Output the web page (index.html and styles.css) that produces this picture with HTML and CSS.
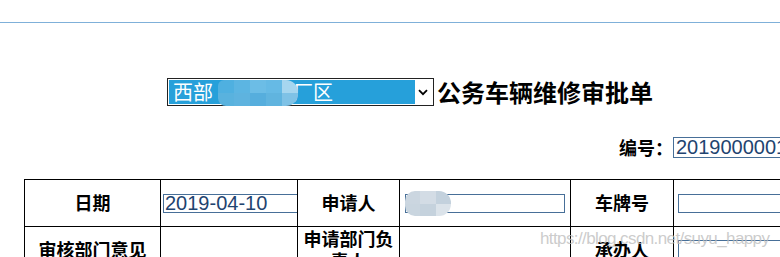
FILE: index.html
```html
<!DOCTYPE html>
<html lang="zh-CN">
<head>
    <meta charset="UTF-8">
    <title>公务车辆维修审批单</title>
    <link rel="stylesheet" href="styles.css">
</head>
<body>
    <div class="page">
        <div class="top-line"></div>

        <div class="title-row">
            <label class="select-wrap">
                <select class="plant-select">
                    <option>西部　　　　厂区</option>
                </select>
                <svg class="chevron" width="10" height="7" viewBox="0 0 10 7">
                    <path d="M1 1.2 L5 5.2 L9 1.2" fill="none" stroke="#000" stroke-width="1.8"/>
                </svg>
                <span class="mosaic mosaic-blue">
                    <i></i><i></i><i></i><i></i><i></i>
                    <i></i><i></i><i></i><i></i><i></i>
                </span>
            </label>
            <h1>公务车辆维修审批单</h1>
        </div>

        <div class="no-row">
            <label for="billNo">编号：</label>
            <input type="text" id="billNo" value="2019000001">
        </div>

        <table class="form">
            <colgroup>
                <col style="width:136px">
                <col style="width:137px">
                <col style="width:102px">
                <col style="width:171px">
                <col style="width:103px">
                <col style="width:122px">
            </colgroup>
            <tr class="row-1">
                <th>日期</th>
                <td><input type="text" class="date-input" value="2019-04-10"></td>
                <th>申请人</th>
                <td class="name-cell">
                    <input type="text" class="field">
                    <span class="mosaic mosaic-gray">
                        <i></i><i></i><i></i>
                        <i></i><i></i><i></i>
                    </span>
                </td>
                <th>车牌号</th>
                <td><input type="text" class="field field-last"></td>
            </tr>
            <tr>
                <th>审核部门意见</th>
                <td></td>
                <th>申请部门负责人</th>
                <td></td>
                <th>承办人</th>
                <td><input type="text" class="field field-last"></td>
            </tr>
        </table>

        <div class="watermark">https://blog.csdn.net/suyu_happy</div>
    </div>
</body>
</html>
```

FILE: styles.css
```css
html,
body {
    margin: 0;
    overflow: hidden;
    background: #fff;
}

body {
    font-family: "Noto Sans CJK SC", "Noto Sans", sans-serif;
    color: #000;
}

.page {
    position: relative;
    width: 820px;
    padding-top: 22px;
}

.top-line {
    border-top: 1px solid #7fb0d9;
}

.title-row {
    display: flex;
    justify-content: center;
    align-items: center;
    margin-top: 55px;
}

.select-wrap {
    position: relative;
    display: flex;
    align-items: center;
    width: 267px;
    height: 28px;
    box-sizing: border-box;
    border: 1px solid #222;
    background: #fff;
}

.plant-select {
    appearance: none;
    -webkit-appearance: none;
    flex: 1;
    height: 24px;
    margin: 0 0 0 1px;
    padding: 0 0 0 4px;
    border: none;
    outline: none;
    background: #26a0da;
    color: #fff;
    font-family: "Noto Sans CJK SC", sans-serif;
    font-size: 20px;
    line-height: 24px;
}

.chevron {
    margin: 0 5px 0 3px;
}

.mosaic {
    position: absolute;
    display: grid;
    overflow: hidden;
    filter: blur(0.6px);
}

.mosaic i {
    display: block;
}

.mosaic-blue {
    left: 50px;
    top: 1px;
    width: 80px;
    height: 26px;
    grid-template-columns: repeat(5, 1fr);
    border-radius: 6px 12px 12px 8px;
}

.mosaic-blue i:nth-child(1) { background: #4fb0e0; }
.mosaic-blue i:nth-child(2) { background: #5cb5e2; }
.mosaic-blue i:nth-child(3) { background: #6cbde6; }
.mosaic-blue i:nth-child(4) { background: #66bae5; }
.mosaic-blue i:nth-child(5) { background: #a6d6ef; }
.mosaic-blue i:nth-child(6) { background: #59b2de; }
.mosaic-blue i:nth-child(7) { background: #5eb3df; }
.mosaic-blue i:nth-child(8) { background: #56aedd; }
.mosaic-blue i:nth-child(9) { background: #60b4df; }
.mosaic-blue i:nth-child(10) { background: #7fc2e6; }

h1 {
    margin: 0 0 0 3px;
    font-size: 24px;
    line-height: 28px;
    font-weight: bold;
}

.no-row {
    display: flex;
    justify-content: flex-end;
    align-items: center;
    margin-top: 30px;
}

.no-row label {
    font-size: 18px;
    font-weight: bold;
    line-height: 22px;
}

.no-row input {
    width: 147px;
    height: 21px;
    box-sizing: border-box;
    margin: 0;
    padding: 0 2px;
    border: 1px solid #476f98;
    font-family: "Liberation Sans", Arial, sans-serif;
    font-size: 20px;
    color: #1f4470;
}

.form {
    margin: 21px 0 0 24px;
    border-collapse: collapse;
    table-layout: fixed;
    width: 771px;
}

.form th,
.form td {
    border: 1px solid #000;
    padding: 0;
    vertical-align: middle;
}

.form th {
    font-size: 18px;
    font-weight: bold;
    line-height: 22px;
    text-align: center;
}

.row-1 {
    height: 47px;
}

.row-1 th {
    padding-bottom: 3px;
}

.form input {
    display: block;
    height: 19px;
    box-sizing: border-box;
    margin: 0;
    padding: 0 1px;
    border: 1px solid #476f98;
    background: transparent;
    font-family: "Liberation Sans", Arial, sans-serif;
    font-size: 20px;
    color: #1f4470;
}

.form .date-input {
    width: 135px;
    margin-left: 2px;
}

.form .field {
    width: 160px;
    margin-left: 5px;
}

.form .field-last {
    margin-left: 4px;
}

.name-cell {
    position: relative;
}

.mosaic-gray {
    left: 5px;
    top: 11px;
    width: 46px;
    height: 25px;
    grid-template-columns: repeat(3, 1fr);
    border-radius: 10px 12px 12px 10px;
}

.mosaic-gray i:nth-child(1) { background: #cbd6e0; }
.mosaic-gray i:nth-child(2) { background: #d3dce5; }
.mosaic-gray i:nth-child(3) { background: #c3d1dd; }
.mosaic-gray i:nth-child(4) { background: #c9d5df; }
.mosaic-gray i:nth-child(5) { background: #c5d2dd; }
.mosaic-gray i:nth-child(6) { background: #dbe3ea; }

.watermark {
    position: absolute;
    z-index: 2;
    left: 540px;
    top: 229px;
    font-family: "Liberation Sans", Arial, sans-serif;
    font-size: 17px;
    line-height: 20px;
    letter-spacing: -0.6px;
    color: rgba(190, 190, 190, 0.8);
    white-space: nowrap;
    pointer-events: none;
}
```
